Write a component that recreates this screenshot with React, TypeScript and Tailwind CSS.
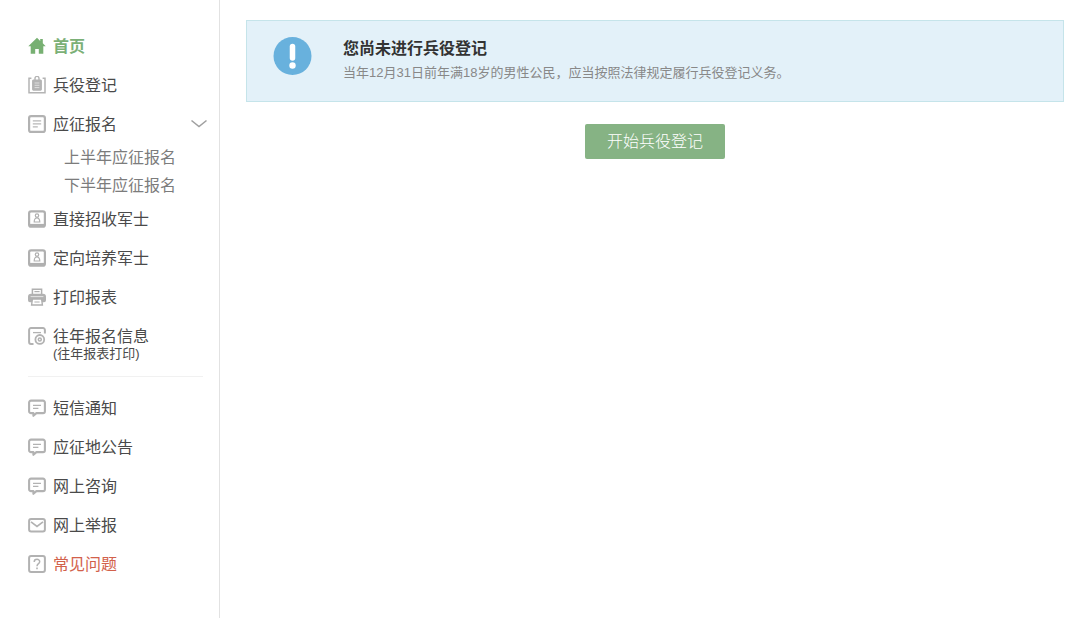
import type { ReactNode } from 'react'

type IconName = 'home' | 'register' | 'form' | 'soldier' | 'printer' | 'history' | 'message' | 'mail' | 'question'

type MenuItem = {
  label: string
  icon: IconName
  note?: string
  tone?: string
  children?: string[]
}

const mainMenu: MenuItem[] = [
  { label: '首页', icon: 'home', tone: 'font-bold text-[#7bb077]' },
  { label: '兵役登记', icon: 'register' },
  { label: '应征报名', icon: 'form', children: ['上半年应征报名', '下半年应征报名'] },
  { label: '直接招收军士', icon: 'soldier' },
  { label: '定向培养军士', icon: 'soldier' },
  { label: '打印报表', icon: 'printer' },
  { label: '往年报名信息', icon: 'history', note: '(往年报表打印)' },
]

const serviceMenu: MenuItem[] = [
  { label: '短信通知', icon: 'message' },
  { label: '应征地公告', icon: 'message' },
  { label: '网上咨询', icon: 'message' },
  { label: '网上举报', icon: 'mail' },
  { label: '常见问题', icon: 'question', tone: 'text-[#d2614b]' },
]

const icons: Record<IconName, ReactNode> = {
  home: <path d="M9 .8 0.300 9.200h2.400v7.600h4.500v-4.700h3.600v4.700h4.500V9.200h2.400L14.800 6.300V2h-2.600v1.900z" fill="#77b072" />,
  register: (
    <g fill="none" stroke="#b4b4b4">
      <path d="M3.400 2.200H1v14.600h16V2.200h-2.400" strokeWidth="1.500" />
      <path d="M7 4V2.400a2 2 0 0 1 4 0V4" strokeWidth="1.400" />
      <rect x="4.600" y="4" width="8.800" height="10.200" rx=".5" fill="#b4b4b4" />
      <path d="M6.600 7h4.800M6.600 9.300h4.800M6.600 11.600h4.800" stroke="#dedede" />
    </g>
  ),
  form: (
    <g fill="none" stroke="#b2b2b2">
      <rect x="1.100" y="1.100" width="15.800" height="15.800" rx="2" strokeWidth="2.200" />
      <path d="M4.800 5.800h8.400M4.800 8.800h8.400M4.800 11.800h5" stroke="#b8b8b8" strokeWidth="1.300" />
    </g>
  ),
  soldier: (
    <g fill="none" stroke="#b0b0b0">
      <rect x="1.100" y="1.300" width="15.800" height="15.400" rx="2" strokeWidth="2.200" />
      <path d="M1.600 15.400h14.800" strokeWidth="3" />
      <circle cx="9" cy="5.600" r="1.700" strokeWidth="1.200" />
      <path d="M6.200 12c0-5.400 5.600-5.400 5.600 0z" strokeWidth="1.200" />
    </g>
  ),
  printer: (
    <g fill="none" stroke="#b0b0b0">
      <path d="M4.400 6V1.200h9.200V6" strokeWidth="1.500" />
      <path d="M6.400 3.600h5.200" strokeWidth="1.200" />
      <path d="M3 5.800h12a3 3 0 0 1 3 3v3.400a2 2 0 0 1-2 2H2a2 2 0 0 1-2-2V8.800a3 3 0 0 1 3-3z" fill="#b2b2b2" stroke="none" />
      <path d="M2.600 8.600h12.800" stroke="#e4e4e4" strokeWidth="1" />
      <path d="M4.400 11h9.200l.8 6H3.600z" fill="#fff" strokeWidth="1.400" />
      <path d="M6.400 14h5.200" />
    </g>
  ),
  history: (
    <g fill="none" stroke="#b2b2b2">
      <path d="M5.500 16.900H3a1.900 1.900 0 0 1-1.900-1.900V3A1.900 1.900 0 0 1 3 1.100h12A1.900 1.900 0 0 1 16.900 3v3.600" strokeWidth="2" />
      <path d="M5 5.600h8" strokeWidth="1.300" />
      <circle cx="11.800" cy="12.400" r="4.400" strokeWidth="1.800" />
      <circle cx="11.800" cy="12.400" r="1.500" strokeWidth="1.500" />
    </g>
  ),
  message: (
    <g fill="none" stroke="#b2b2b2">
      <path d="M3 1.600h12a1.900 1.900 0 0 1 1.900 1.900v8.700a1.900 1.900 0 0 1-1.900 1.900H8.400L5.400 16.800v-2.700H3a1.900 1.900 0 0 1-1.900-1.900V3.500A1.900 1.900 0 0 1 3 1.600z" strokeWidth="2.100" strokeLinejoin="round" />
      <path d="M5 6.300h8M5 9.300h5.400" strokeWidth="1.300" />
    </g>
  ),
  mail: (
    <g fill="none" stroke="#b2b2b2" strokeWidth="2">
      <rect x="1.100" y="3.100" width="15.800" height="12.400" rx="2" />
      <path d="M3 5.800l6 4.600 6-4.600" strokeWidth="1.700" />
    </g>
  ),
  question: (
    <g fill="none" stroke="#b2b2b2">
      <rect x="1.100" y="1.100" width="15.800" height="15.800" rx="2" strokeWidth="2" />
      <path d="M6.200 7c0-3.600 5.700-3.400 5.500-.2C11.600 8.800 9 8.600 9 11.200" strokeWidth="1.500" />
      <path d="M9 12.600v1.600" strokeWidth="1.600" />
    </g>
  ),
}

function Menu({ items }: { items: MenuItem[] }) {
  return (
    <ul>
      {items.map((item) => (
        <li key={item.label}>
          <a href="#" className={`flex gap-[7px] py-[10px] leading-[19px] ${item.tone ?? 'text-[#4a4a4a]'}`}>
            <svg viewBox="0 0 18 18" className="h-[18px] w-[18px] shrink-0" aria-hidden="true">
              {icons[item.icon]}
            </svg>
            <span className="flex-1">
              {item.label}
              {item.note ? <span className="block text-[13px] leading-4">{item.note}</span> : null}
            </span>
            {item.children ? (
              <svg viewBox="0 0 17 18" className="h-[18px] w-[17px] shrink-0" fill="none" stroke="#a0a0a0" strokeWidth="1.600" aria-hidden="true">
                <path d="M1.500 5.500 9 11.500l7.500-6" />
              </svg>
            ) : null}
          </a>
          {item.children ? (
            <ul className="pl-9">
              {item.children.map((child) => (
                <li key={child}>
                  <a href="#" className="block leading-7 text-[#7c7c7c]">{child}</a>
                </li>
              ))}
            </ul>
          ) : null}
        </li>
      ))}
    </ul>
  )
}

export default function App() {
  return (
    <div className="flex min-h-screen bg-white font-['Liberation_Sans','Noto_Sans_CJK_SC',sans-serif] text-base">
      <nav className="w-[220px] shrink-0 border-r border-[#e2e2e2] pt-[27px] pr-3 pl-7">
        <Menu items={mainMenu} />
        <hr className="mt-1 mr-1 mb-3 border-[#f1f1f1]" />
        <Menu items={serviceMenu} />
      </nav>

      <main className="flex-1 pt-5 pr-4 pl-[26px]">
        <section className="flex gap-[30px] border border-[#c5e4ea] bg-[#e3f1f9] px-[26px] py-4">
          <svg viewBox="0 0 40 40" className="h-10 w-10 shrink-0" aria-hidden="true">
            <circle cx="19.500" cy="19" r="19" fill="#68b1dd" />
            <path d="M19.500 9.500v11.500" stroke="#fff" strokeWidth="5.500" strokeLinecap="round" />
            <circle cx="19.500" cy="28.500" r="3.200" fill="#fff" />
          </svg>
          <div>
            <h1 className="leading-6 font-bold text-[#333]">您尚未进行兵役登记</h1>
            <p className="text-[13px] leading-6 text-[#888]">
              当年12月31日前年满18岁的男性公民，应当按照法律规定履行兵役登记义务。
            </p>
          </div>
        </section>
        <div className="mt-[22px] flex justify-center">
          <button type="button" className="h-[35px] rounded-xs bg-[#86b384] px-[22px] font-light text-white">
            开始兵役登记
          </button>
        </div>
      </main>
    </div>
  )
}
